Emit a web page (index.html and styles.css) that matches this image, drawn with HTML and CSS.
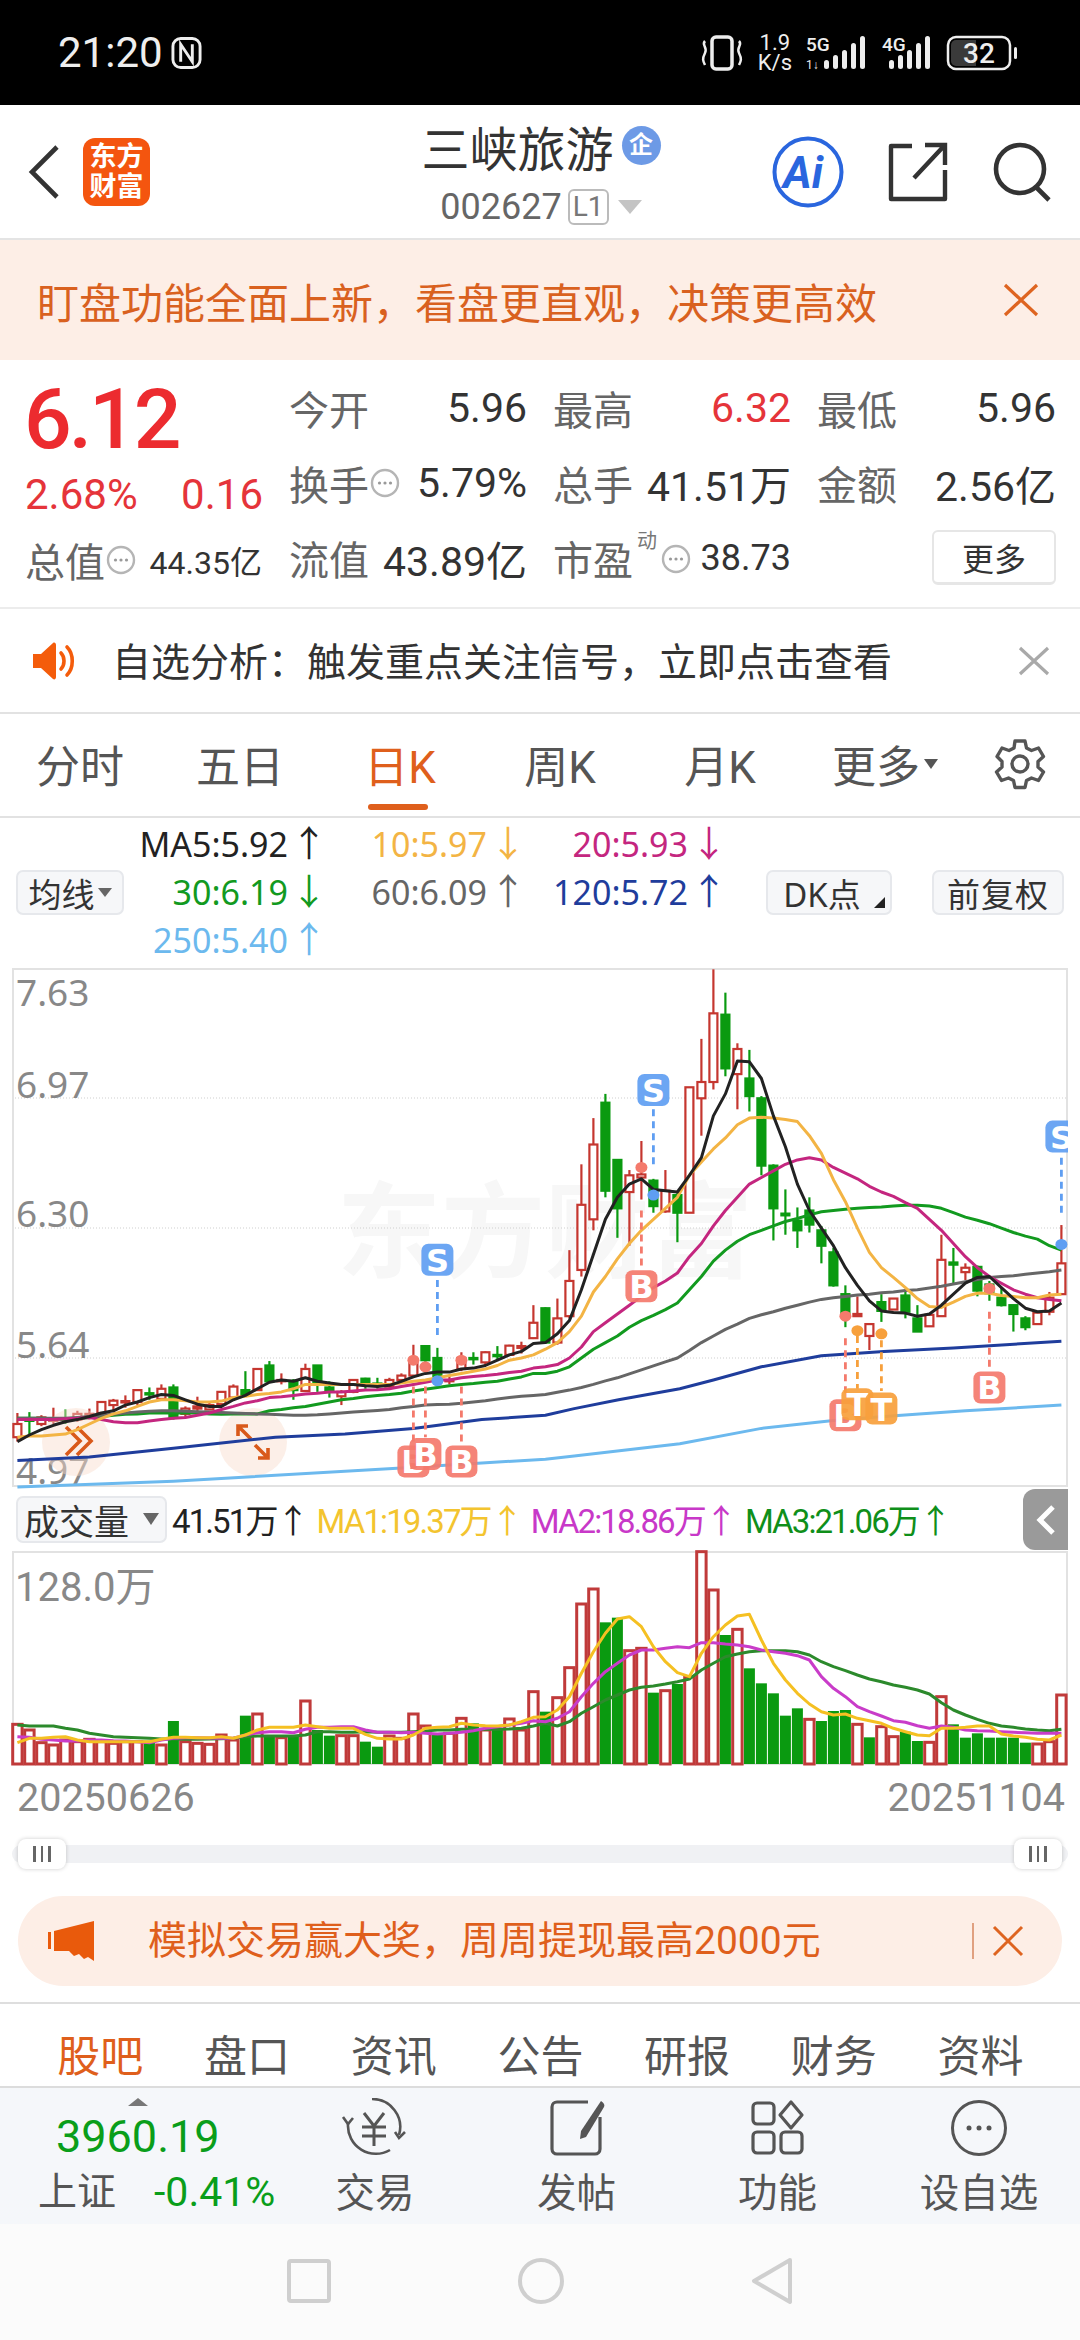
FILE: index.html
```html
<!DOCTYPE html>
<html lang="zh">
<head>
<meta charset="utf-8">
<title>三峡旅游 002627</title>
<link rel="stylesheet" href="styles.css">
</head>
<body>

<svg class="defs" width="0" height="0">
	<symbol id="ico-more" viewBox="0 0 30 30">
		<circle cx="15" cy="15" r="13" fill="none" stroke="#b5b5b5" stroke-width="2.4"/>
		<circle cx="9.5" cy="15" r="1.6" fill="#999"/><circle cx="15" cy="15" r="1.6" fill="#999"/><circle cx="20.5" cy="15" r="1.6" fill="#999"/>
	</symbol>
</svg>

<div class="statusbar">
	<div class="status-time">21:20
		<svg class="nfc" width="31" height="34" viewBox="0 0 32 34"><rect x="2" y="2" width="28" height="30" rx="8" fill="none" stroke="#eee" stroke-width="3"/><path d="M10 26V8l12 18V8" fill="none" stroke="#eee" stroke-width="3"/></svg>
	</div>
	<div class="status-icons">
		<svg width="44" height="36" viewBox="0 0 44 36"><rect x="12" y="2" width="20" height="32" rx="4" fill="none" stroke="#eee" stroke-width="3.5"/><path d="M5 6c-4 4 3 6 0 12s-2 8 0 12M39 6c4 4-3 6 0 12s2 8 0 12" fill="none" stroke="#eee" stroke-width="2.5"/></svg>
		<div class="speed"><span>1.9</span><span>K/s</span></div>
		<svg class="net" width="62" height="36" viewBox="0 0 62 36">
			<text x="0" y="16" class="net-label">5G</text>
			<text x="0" y="34" class="net-small">1↓</text>
			<rect x="18" y="25" width="5" height="9" rx="2.5" fill="#eee"/><rect x="27" y="20" width="5" height="14" rx="2.5" fill="#eee"/><rect x="36" y="15" width="5" height="19" rx="2.5" fill="#eee"/><rect x="45" y="8" width="5" height="26" rx="2.5" fill="#eee"/><rect x="54" y="1" width="5" height="33" rx="2.5" fill="#eee"/>
		</svg>
		<svg class="net" width="50" height="36" viewBox="0 0 50 36">
			<text x="0" y="16" class="net-label">4G</text>
			<rect x="7" y="25" width="5" height="9" rx="2.5" fill="#eee"/><rect x="16" y="20" width="5" height="14" rx="2.5" fill="#eee"/><rect x="25" y="15" width="5" height="19" rx="2.5" fill="#eee"/><rect x="34" y="8" width="5" height="26" rx="2.5" fill="#eee"/><rect x="43" y="1" width="5" height="33" rx="2.5" fill="#eee"/>
		</svg>
		<svg width="72" height="36" viewBox="0 0 72 36">
			<rect x="2" y="2" width="62" height="32" rx="8" fill="none" stroke="#eee" stroke-width="2.5"/>
			<path d="M10 5h20v26H10a5 5 0 0 1-5-5V10a5 5 0 0 1 5-5z" fill="#3a3a3a"/>
			<text x="33" y="28" class="batt-num">32</text>
			<rect x="68" y="12" width="3" height="12" rx="1.5" fill="#eee"/>
		</svg>
	</div>
</div>

<header class="header">
	<div class="header-left">
		<svg width="32" height="54" viewBox="0 0 32 54"><path d="M29 2L4 27l25 25" fill="none" stroke="#333" stroke-width="4.6"/></svg>
		<div class="logo"><span>东方</span><span>财富</span></div>
	</div>
	<div class="header-mid">
		<div class="stock-name">三峡旅游<span class="ent-badge">企</span></div>
		<div class="stock-code">002627<span class="level">L1</span><i class="code-arrow"></i></div>
	</div>
	<div class="header-right">
		<svg width="72" height="72" viewBox="0 0 72 72"><circle cx="36" cy="36" r="33.5" fill="#fff" stroke="#2a66de" stroke-width="4"/><text x="11" y="52" class="ai-text">Ai</text></svg>
		<svg width="60" height="60" viewBox="0 0 60 60"><path d="M24 4H3v53h54V28" fill="none" stroke="#333" stroke-width="4.4" stroke-linejoin="round"/><path d="M26 36L55 5M37 3h20v20" fill="none" stroke="#333" stroke-width="4.4"/></svg>
		<svg width="60" height="60" viewBox="0 0 60 60"><circle cx="28" cy="27" r="24" fill="none" stroke="#333" stroke-width="4.6"/><path d="M44 45l13 13" fill="none" stroke="#333" stroke-width="4.6"/></svg>
	</div>
</header>

<div class="banner">
	<span>盯盘功能全面上新，看盘更直观，决策更高效</span>
	<svg class="banner-x" width="36" height="34" viewBox="0 0 36 34"><path d="M2 2l32 30M34 2L2 32" fill="none" stroke="#de6420" stroke-width="3.2"/></svg>
</div>

<section class="quote">
	<div class="quote-main">
		<div class="price">6.12</div>
		<div class="change"><span>2.68%</span><span>0.16</span></div>
		<div class="cap">
			<span class="lbl">总值</span><svg class="more-dot" width="30" height="30"><use href="#ico-more"/></svg><span class="cap-val">44.35亿</span>
		</div>
	</div>
	<div class="stats">
		<div class="stat"><span class="lbl">今开</span><span class="val">5.96</span></div>
		<div class="stat"><span class="lbl">最高</span><span class="val up">6.32</span></div>
		<div class="stat"><span class="lbl">最低</span><span class="val">5.96</span></div>
		<div class="stat"><span class="lbl">换手<svg class="more-dot" width="30" height="30"><use href="#ico-more"/></svg></span><span class="val">5.79%</span></div>
		<div class="stat"><span class="lbl">总手</span><span class="val">41.51万</span></div>
		<div class="stat"><span class="lbl">金额</span><span class="val">2.56亿</span></div>
		<div class="stat"><span class="lbl">流值</span><span class="val">43.89亿</span></div>
		<div class="stat"><span class="lbl">市盈<sup class="dyn">动</sup><svg class="more-dot" width="30" height="30"><use href="#ico-more"/></svg></span><span class="val small">38.73</span></div>
		<div class="stat stat-btn"><button class="more-btn">更多</button></div>
	</div>
</section>

<div class="notice">
	<svg width="46" height="38" viewBox="0 0 46 38"><path d="M0 12h8L20 1c1.500-1 3 0 3 2v32c0 2-1.500 3-3 2L8 26H0z" fill="#f45c0b"/><path d="M28 11c4 4 4 12 0 16M34 5c7 7 7 21 0 28" fill="none" stroke="#f45c0b" stroke-width="3.6" stroke-linecap="round"/></svg>
	<span class="notice-text">自选分析：触发重点关注信号，立即点击查看</span>
	<svg class="notice-x" width="32" height="30" viewBox="0 0 32 30"><path d="M2 2l28 26M30 2L2 28" fill="none" stroke="#a9a9a9" stroke-width="3.2"/></svg>
</div>

<nav class="period-tabs">
	<span class="ptab">分时</span>
	<span class="ptab">五日</span>
	<span class="ptab active">日K</span>
	<span class="ptab">周K</span>
	<span class="ptab">月K</span>
	<span class="ptab ptab-more">更多<i class="tab-arrow"></i></span>
	<span class="ptab">
		<svg width="52" height="52" viewBox="0 0 52 52"><path d="M21 3h10l1.500 7 5 2.500 7-2.500 5 8.500-5.500 5v5.500l5.500 5-5 8.500-7-2.500-5 2.500-1.500 7H21l-1.500-7-5-2.500-7 2.500-5-8.500 5.500-5V23.500L3 18.500 8 10l7 2.500 5-2.500z" fill="none" stroke="#555" stroke-width="3.4" stroke-linejoin="round"/><circle cx="26" cy="26" r="8" fill="none" stroke="#555" stroke-width="3.4"/></svg>
	</span>
</nav>

<div class="ma-bar">
	<button class="chip chip-ma">均线<i class="chip-arrow"></i></button>
	<div class="ma-grid">
		<span class="c-ma5">MA5:5.92<b class="ar">↑</b></span>
		<span class="c-ma10">10:5.97<b class="ar">↓</b></span>
		<span class="c-ma20">20:5.93<b class="ar">↓</b></span>
		<span class="c-ma30">30:6.19<b class="ar">↓</b></span>
		<span class="c-ma60">60:6.09<b class="ar">↑</b></span>
		<span class="c-ma120">120:5.72<b class="ar">↑</b></span>
		<span class="c-ma250">250:5.40<b class="ar">↑</b></span>
	</div>
	<button class="chip chip-dk">DK点<i class="chip-corner"></i></button>
	<button class="chip chip-fq">前复权</button>
</div>

<svg id="kline" class="chart" width="1080" height="519" viewBox="0 968 1080 519">
	<text x="337" y="1270" class="watermark">东方财富</text>
	<line x1="12" x2="1068" y1="1098" y2="1098" class="gridline"/>
	<line x1="12" x2="1068" y1="1228" y2="1228" class="gridline"/>
	<line x1="12" x2="1068" y1="1358" y2="1358" class="gridline"/>
	<text x="16" y="1006" class="axis">7.63</text>
	<text x="16" y="1098" class="axis">6.97</text>
	<text x="16" y="1227" class="axis">6.30</text>
	<text x="16" y="1358" class="axis">5.64</text>
	<text x="16" y="1484" class="axis">4.97</text>
	<rect x="13" y="969" width="1054" height="517" class="frame"/>
</svg>

<div class="vol-bar">
	<button class="chip chip-vol">成交量<i class="chip-arrow big"></i></button>
	<span class="vol-item c-dark">41.51万↑</span>
	<span class="vol-item c-m1">MA1:19.37万↑</span>
	<span class="vol-item c-m2">MA2:18.86万↑</span>
	<span class="vol-item c-m3">MA3:21.06万↑</span>
	<div class="collapse"><svg width="20" height="32" viewBox="0 0 20 32"><path d="M17 3L4 16l13 13" fill="none" stroke="#fff" stroke-width="5"/></svg></div>
</div>

<svg id="volume" class="chart" width="1080" height="214" viewBox="0 1551 1080 214">
	<text x="15" y="1601" class="axis axis-vol">128.0万</text>
	<rect x="13" y="1552" width="1054" height="212" class="frame"/>
</svg>

<div class="dates"><span>20250626</span><span>20251104</span></div>

<div class="slider">
	<div class="slider-track"></div>
	<div class="slider-handle"><i></i><i></i><i></i></div>
	<div class="slider-handle"><i></i><i></i><i></i></div>
</div>

<div class="promo">
	<svg width="46" height="40" viewBox="0 0 46 40"><path d="M0 11h3v17H0zM6 10L46 0v40l-6-4-4 2-5-5-5 2-5-5-15 0z" fill="#e95a0c"/></svg>
	<span class="promo-text">模拟交易赢大奖，周周提现最高2000元</span>
	<i class="promo-sep"></i>
	<svg width="32" height="32" viewBox="0 0 32 32"><path d="M2 2l28 28M30 2L2 30" fill="none" stroke="#de6420" stroke-width="3"/></svg>
</div>

<nav class="news-tabs">
	<span class="ntab active">股吧</span>
	<span class="ntab">盘口</span>
	<span class="ntab">资讯</span>
	<span class="ntab">公告</span>
	<span class="ntab">研报</span>
	<span class="ntab">财务</span>
	<span class="ntab">资料</span>
</nav>

<div class="actionbar">
	<div class="index-box">
		<i class="index-tri"></i>
		<div class="index-num">3960.19</div>
		<div class="index-row"><span>上证</span><span class="index-pct">-0.41%</span></div>
	</div>
	<div class="action">
		<svg width="70" height="60" viewBox="0 0 70 60"><path d="M32 1a28 28 0 0 1 27 36M50 52A28 28 0 0 1 8 26" fill="none" stroke="#555" stroke-width="2.6"/><path d="M3 19l5 7 5-6M55 34l4 6 6-6" fill="none" stroke="#555" stroke-width="2.6"/><path d="M24 15l10 13 10-13M22 29h24M22 38h24M34 28v20" fill="none" stroke="#555" stroke-width="3"/></svg>
		<span>交易</span>
	</div>
	<div class="action">
		<svg width="58" height="58" viewBox="0 0 58 58"><path d="M40 3H9a5 5 0 0 0-5 5v42a5 5 0 0 0 5 5h38a5 5 0 0 0 5-5V18" fill="none" stroke="#555" stroke-width="3.2"/><path d="M53 2c3 2 4 4 3 6L38 38l-6 2 1-8z" fill="#555"/></svg>
		<span>发帖</span>
	</div>
	<div class="action">
		<svg width="56" height="56" viewBox="0 0 56 56"><rect x="3" y="3" width="21" height="21" rx="4" fill="none" stroke="#555" stroke-width="3.2"/><path d="M41 2l11 13-11 13-11-13z" fill="none" stroke="#555" stroke-width="3.2" stroke-linejoin="round"/><rect x="3" y="32" width="21" height="21" rx="4" fill="none" stroke="#555" stroke-width="3.2"/><rect x="31" y="32" width="21" height="21" rx="4" fill="none" stroke="#555" stroke-width="3.2"/></svg>
		<span>功能</span>
	</div>
	<div class="action">
		<svg width="58" height="58" viewBox="0 0 58 58"><circle cx="29" cy="29" r="26.5" fill="none" stroke="#555" stroke-width="3"/><circle cx="19" cy="29" r="2.5" fill="#555"/><circle cx="29" cy="29" r="2.5" fill="#555"/><circle cx="39" cy="29" r="2.5" fill="#555"/></svg>
		<span>设自选</span>
	</div>
</div>

<div class="navbar">
	<svg width="44" height="44" viewBox="0 0 44 44"><rect x="2" y="2" width="40" height="40" rx="2" fill="none" stroke="#cfcfcf" stroke-width="4"/></svg>
	<svg width="46" height="46" viewBox="0 0 46 46"><circle cx="23" cy="23" r="21" fill="none" stroke="#cfcfcf" stroke-width="4"/></svg>
	<svg width="42" height="48" viewBox="0 0 42 48"><path d="M39 3L3 24l36 21z" fill="none" stroke="#cfcfcf" stroke-width="4" stroke-linejoin="round"/></svg>
</div>

<script src="chart.js"></script>
</body>
</html>
```

FILE: styles.css
```css
* {
	box-sizing: border-box;
}
body {
	background-color: #fff;
	color: #333;
	font-family: Roboto, "Noto Sans CJK SC", sans-serif;
	margin: 0;
	width: 1080px;
}
button {
	font-family: inherit;
}
.defs {
	display: block;
	height: 0;
}

/* status bar */
.statusbar {
	align-items: center;
	background-color: #000;
	color: #eee;
	display: flex;
	height: 105px;
	justify-content: space-between;
	padding: 0 62px 0 58px;
}
.status-time {
	align-items: center;
	display: flex;
	font-size: 42px;
	gap: 8px;
}
.status-icons {
	align-items: center;
	display: flex;
	gap: 14px;
}
.speed {
	display: flex;
	flex-direction: column;
	font-size: 22px;
	line-height: 20px;
	text-align: center;
}
.net {
	overflow: visible;
}
.net-label {
	fill: #eee;
	font: 500 19px Roboto, sans-serif;
}
.net-small {
	fill: #eee;
	font: 12px Roboto, sans-serif;
}
.batt-num {
	fill: #eee;
	font: 500 28px Roboto, sans-serif;
	text-anchor: middle;
}

/* header */
.header {
	align-items: center;
	border-bottom: 2px solid #e4e4e4;
	display: grid;
	grid-template-columns: 1fr auto 1fr;
	height: 135px;
	padding: 0 28px;
}
.header-left {
	align-items: center;
	display: flex;
	gap: 23px;
}
.logo {
	background-color: #f4550f;
	border-radius: 12px;
	color: #fff;
	display: flex;
	flex-direction: column;
	font-size: 27px;
	font-weight: 700;
	height: 68px;
	justify-content: center;
	line-height: 30px;
	text-align: center;
	width: 67px;
}
.header-mid {
	align-items: center;
	display: flex;
	flex-direction: column;
	margin: -4px 0 0 2px;
}
.stock-name {
	align-items: center;
	color: #333;
	display: flex;
	font-size: 48px;
	gap: 8px;
	height: 70px;
}
.ent-badge {
	background-color: #6d9ae6;
	border-radius: 50%;
	color: #fff;
	font-size: 24px;
	font-weight: 700;
	height: 39px;
	line-height: 39px;
	text-align: center;
	width: 39px;
}
.stock-code {
	align-items: center;
	color: #666;
	display: flex;
	font-size: 36px;
	height: 44px;
	margin-top: 4px;
}
.level {
	border: 2px solid #bbb;
	border-radius: 6px;
	color: #777;
	font-size: 28px;
	height: 36px;
	line-height: 32px;
	margin-left: 6px;
	text-align: center;
	width: 41px;
}
.code-arrow {
	border-left: 12px solid transparent;
	border-right: 12px solid transparent;
	border-top: 14px solid #c4c4c4;
	margin-left: 9px;
}
.header-right {
	align-items: center;
	display: flex;
	gap: 44px;
	justify-content: flex-end;
}
.ai-text {
	fill: #2a66de;
	font: italic 700 44px Roboto, sans-serif;
}

/* orange banner */
.banner {
	align-items: center;
	background-color: #fdeee6;
	color: #d9611f;
	display: flex;
	font-size: 42px;
	height: 120px;
	justify-content: space-between;
	padding: 0 41px 0 37px;
}

/* quote */
.quote {
	border-bottom: 2px solid #ececec;
	display: flex;
	height: 249px;
	padding-top: 10px;
}
.quote-main {
	padding: 1px 0 0 25px;
	width: 289px;
}
.price {
	color: #ec2b2f;
	font-size: 84px;
	font-weight: 500;
	height: 84px;
	letter-spacing: -3px;
	line-height: 98px;
	margin-left: -1px;
}
.change {
	color: #e5343a;
	display: flex;
	font-size: 42px;
	height: 67px;
	justify-content: space-between;
	line-height: 66px;
	padding-top: 7px;
	width: 238px;
}
.cap {
	align-items: center;
	display: flex;
	height: 75px;
	width: 237px;
}
.cap-val {
	color: #333;
	font-size: 32px;
	margin-left: auto;
}
.lbl {
	align-items: center;
	color: #666;
	display: inline-flex;
	font-size: 40px;
	white-space: nowrap;
}
.more-dot {
	margin-left: 1px;
}
.stats {
	column-gap: 26px;
	display: grid;
	grid-auto-rows: 75px;
	grid-template-columns: 238px 238px 239px;
}
.stat {
	align-items: center;
	display: flex;
	justify-content: space-between;
}
.val {
	color: #333;
	font-size: 41px;
	white-space: nowrap;
}
.val.up {
	color: #e5343a;
}
.val.small {
	font-size: 36px;
}
.dyn {
	color: #777;
	font-size: 20px;
	line-height: 1;
	margin: 0 0 34px 4px;
	width: 24px;
}
.dyn + .more-dot {
	margin-left: 0;
	margin-top: 2px;
}
.stat-btn {
	justify-content: flex-end;
}
.more-btn {
	background-color: #fff;
	border: 2px solid #e6e6e6;
	border-bottom-width: 3px;
	border-radius: 6px;
	color: #333;
	font-size: 32px;
	height: 55px;
	padding: 0;
	width: 124px;
}

/* notice */
.notice {
	align-items: center;
	border-bottom: 2px solid #e2e2e2;
	display: flex;
	height: 105px;
	padding: 0 30px 0 33px;
}
.notice-text {
	color: #333;
	flex: 1;
	font-size: 39px;
	margin: 0 0 4px 33px;
}

/* period tabs */
.period-tabs {
	align-items: center;
	border-bottom: 2px solid #e2e2e2;
	display: grid;
	grid-template-columns: repeat(6, 160px) 120px;
	height: 104px;
	padding-bottom: 2px;
}
.ptab {
	align-items: center;
	color: #555;
	display: flex;
	font-size: 44px;
	height: 100%;
	justify-content: center;
	position: relative;
}
.ptab.active {
	color: #df5f1c;
}
.ptab.active::after {
	background-color: #df5f1c;
	border-radius: 3px;
	bottom: 4px;
	content: "";
	height: 6px;
	left: 48px;
	position: absolute;
	width: 60px;
}
.ptab-more {
	padding-left: 10px;
}
.tab-arrow {
	border-left: 7px solid transparent;
	border-right: 7px solid transparent;
	border-top: 10px solid #555;
	margin-left: 4px;
}

/* MA legend */
.ma-bar {
	align-items: center;
	display: flex;
	height: 150px;
	padding: 3px 16px 0;
}
.chip {
	align-items: center;
	background-color: #f6f7f9;
	border: 2px solid #e6e8ec;
	border-radius: 7px;
	color: #333;
	display: flex;
	flex: none;
	font-size: 33px;
	height: 45px;
	justify-content: center;
	margin-top: -4px;
	padding: 0;
	position: relative;
}
.chip-ma {
	width: 108px;
}
.chip-dk {
	font-family: "Noto Sans", "Noto Sans CJK SC", sans-serif;
	margin-left: 50px;
	padding-right: 14px;
	width: 126px;
}
.chip-fq {
	letter-spacing: 1px;
	margin-left: 40px;
	width: 132px;
}
.chip-arrow {
	border-left: 7px solid transparent;
	border-right: 7px solid transparent;
	border-top: 9px solid #666;
	margin-left: 3px;
}
.chip-arrow.big {
	border-left-width: 8px;
	border-right-width: 8px;
	border-top-width: 12px;
	margin-left: 14px;
}
.chip-corner {
	border-bottom: 11px solid #222;
	border-left: 11px solid transparent;
	bottom: 5px;
	position: absolute;
	right: 5px;
}
.ma-grid {
	display: grid;
	font-family: "Noto Sans", sans-serif;
	font-size: 34px;
	grid-auto-rows: 48px;
	grid-template-columns: 192px 199px 201px;
	line-height: 48px;
	margin-top: -6px;
	text-align: right;
	white-space: nowrap;
}
.ar {
	display: inline-block;
	font-family: "Noto Sans CJK SC", sans-serif;
	font-size: 36px;
	font-weight: 400;
	line-height: 1;
	margin: 0 -11px 0 3px;
}
.c-ma5 { color: #222; }
.c-ma10 { color: #f3b444; }
.c-ma20 { color: #c4267f; }
.c-ma30 { color: #129a1f; }
.c-ma60 { color: #666; }
.c-ma120 { color: #1f3d9c; }
.c-ma250 { color: #6cb9ee; }

/* charts */
.chart {
	display: block;
	overflow: visible;
}
.frame {
	fill: none;
	stroke: #e2e2e2;
	stroke-width: 2;
}
.gridline {
	stroke: #cfcfcf;
	stroke-dasharray: 1 2;
	stroke-width: 1;
}
.axis {
	fill: #888;
	font: 37px "Noto Sans", "Noto Sans CJK SC", sans-serif;
}
.axis-vol {
	font-family: Roboto, "Noto Sans CJK SC", sans-serif;
	font-size: 40px;
}
.watermark {
	fill: #f7f7f7;
	font: 700 104px "Noto Sans CJK SC", sans-serif;
}
.wick {
	stroke-width: 2.2;
}
.up-c {
	fill: #fff;
	stroke: #c5362f;
}
.down-c {
	fill: #0a9a10;
	stroke: #0a9a10;
}
.ma-line {
	fill: none;
	stroke-linejoin: round;
	stroke-width: 3;
}
.bar-up {
	fill: #fff;
	stroke: #c03a3a;
	stroke-width: 3;
}
.bar-down {
	fill: #0a9a10;
}
.hint-circle {
	fill: #f9dccb;
	opacity: .45;
}
.hint-arrow {
	fill: none;
	stroke: #d9591a;
	stroke-width: 3.6;
}
.mark-dash {
	stroke-dasharray: 7 5;
	stroke-width: 2.8;
}
.mark-box {
	opacity: .92;
}
.mark-letter {
	fill: #fff;
	font: 700 32px "DejaVu Sans", sans-serif;
	text-anchor: middle;
}

/* volume legend */
.vol-bar {
	align-items: center;
	display: flex;
	height: 64px;
	padding-left: 16px;
	position: relative;
}
.chip-vol {
	font-size: 35px;
	height: 47px;
	margin-right: 5px;
	margin-top: 0;
	width: 151px;
}
.vol-item {
	font-size: 33px;
	letter-spacing: -1.9px;
	margin-right: 9px;
	white-space: nowrap;
}
.c-dark { color: #222; }
.c-m1 { color: #f3c42f; }
.c-m2 { color: #c838c8; }
.c-m3 { color: #0f8f1a; }
.collapse {
	align-items: center;
	background-color: #9a9a9a;
	border-radius: 12px 0 0 12px;
	display: flex;
	height: 61px;
	justify-content: center;
	position: absolute;
	right: 12px;
	top: 2px;
	width: 45px;
}

/* dates + slider */
.dates {
	color: #888;
	display: flex;
	font-size: 39.5px;
	height: 74px;
	justify-content: space-between;
	line-height: 66px;
	padding: 0 15px 0 17px;
}
.slider {
	align-items: center;
	display: flex;
	height: 30px;
	justify-content: space-between;
	padding: 0 18px;
	position: relative;
}
.slider-track {
	background-color: #f0f1f4;
	border-radius: 10px;
	height: 18px;
	left: 12px;
	position: absolute;
	right: 12px;
}
.slider-handle {
	align-items: center;
	background-color: #fff;
	border-radius: 8px;
	box-shadow: 0 0 4px rgba(0, 0, 0, .2);
	display: flex;
	gap: 5px;
	height: 30px;
	justify-content: center;
	position: relative;
	width: 48px;
}
.slider-handle i {
	background-color: #666;
	height: 16px;
	width: 2.5px;
}

/* promo */
.promo {
	align-items: center;
	background-color: #fdeee6;
	border-radius: 45px;
	color: #df5f1c;
	display: flex;
	font-size: 39px;
	height: 90px;
	margin: 27px 18px 0;
	padding: 0 38px 0 30px;
}
.promo-text {
	flex: 1;
	margin: 0 0 9px 54px;
}
.promo-sep {
	background-color: #e0a080;
	height: 36px;
	margin-right: 18px;
	width: 2px;
}

/* news tabs */
.news-tabs {
	align-items: center;
	border-bottom: 2px solid #dcdcdc;
	border-top: 2px solid #dedede;
	display: grid;
	grid-template-columns: repeat(7, 146.7px);
	height: 86px;
	margin-top: 16px;
	padding: 16px 0 0 27px;
}
.ntab {
	color: #555;
	font-size: 43px;
	text-align: center;
}
.ntab.active {
	color: #df5f1c;
}

/* bottom action bar */
.actionbar {
	background-color: #f5f7fa;
	display: grid;
	grid-template-columns: 274px 202px 201px 201px 202px;
	height: 136px;
}
.index-box {
	padding: 10px 0 0 38px;
}
.index-tri {
	border-bottom: 8px solid #777;
	border-left: 10px solid transparent;
	border-right: 10px solid transparent;
	display: block;
	height: 0;
	margin-left: 90px;
	width: 0;
}
.index-num {
	color: #0a9e1a;
	font-size: 45px;
	line-height: 46px;
	margin: 8px 0 0 18px;
}
.index-row {
	align-items: center;
	color: #555;
	display: flex;
	font-size: 39px;
	line-height: 50px;
	margin-top: 7px;
	white-space: nowrap;
}
.index-pct {
	color: #0a9e1a;
	font-size: 41px;
	margin-left: 38px;
}
.action {
	align-items: center;
	color: #555;
	display: flex;
	flex-direction: column;
	font-size: 39.5px;
	padding-top: 10px;
}
.action svg {
	height: 60px;
}
.action span {
	line-height: 50px;
	margin-top: 11px;
	white-space: nowrap;
}

/* system nav */
.navbar {
	align-items: center;
	background-color: #fbfbfb;
	display: flex;
	gap: 187px;
	height: 116px;
	justify-content: center;
	padding-bottom: 2px;
}
```

FILE: chart.js
```js
// values are in "raster rows" read off the chart, mapped to page y below
var NS = "http://www.w3.org/2000/svg";

function xAt(i) { return 17.4 + 12 * i; }
function kY(v) { return 810 + v / 2.272; }
function vY(v) { return 1480 + v / 3; }

function el(parent, name, attrs, text)
{
	var node = document.createElementNS(NS, name);
	for (var k in attrs) node.setAttribute(k, attrs[k]);
	if (text) node.textContent = text;
	parent.appendChild(node);
	return node;
}

// [up?, high, bodyTop, bodyBottom, low]
var candles = [
	[1,1370,1395,1425,1435],[0,1368,1385,1388,1418],[1,1375,1380,1395,1400],[1,1358,1385,1388,1395],
	[0,1362,1383,1386,1395],[1,1365,1372,1385,1390],[1,1360,1372,1375,1385],[1,1345,1345,1370,1370],
	[1,1338,1342,1352,1365],[1,1330,1343,1346,1358],[1,1318,1318,1345,1352],[0,1312,1325,1328,1340],
	[1,1305,1315,1338,1340],[0,1305,1312,1380,1385],[1,1355,1360,1372,1380],[1,1333,1355,1360,1375],
	[1,1345,1352,1362,1362],[1,1322,1322,1350,1355],[1,1305,1310,1335,1340],[0,1275,1318,1330,1332],
	[1,1268,1270,1318,1320],[0,1252,1262,1298,1302],[1,1280,1295,1298,1305],[0,1293,1297,1318,1340],
	[1,1258,1270,1320,1322],[0,1262,1262,1300,1322],[0,1298,1312,1322,1335],[1,1318,1322,1332,1352],
	[1,1293,1295,1322,1325],[0,1290,1292,1305,1315],[0,1290,1303,1305,1315],[1,1290,1295,1310,1312],
	[1,1280,1285,1295,1300],[1,1215,1255,1285,1290],[0,1218,1218,1250,1275],[0,1222,1245,1295,1305],
	[1,1285,1295,1298,1305],[1,1232,1245,1270,1275],[0,1232,1245,1248,1260],[1,1230,1232,1255,1262],
	[0,1218,1238,1241,1250],[1,1215,1217,1238,1240],[1,1208,1218,1222,1235],[1,1125,1165,1200,1202],
	[0,1130,1132,1210,1212],[1,1110,1155,1210,1215],[1,1000,1070,1150,1155],[1,805,897,1045,1060],
	[1,700,760,930,955],[0,645,665,865,880],[0,793,795,905,972],[1,818,830,868,990],
	[1,752,828,835,885],[0,838,842,900,915],[1,818,865,912,915],[0,870,875,915,982],
	[1,630,630,915,915],[1,520,618,655,740],[1,362,462,618,635],[0,415,465,587,605],
	[1,530,543,600,680],[0,545,610,650,685],[0,650,655,808,830],[0,805,808,905,978],
	[0,862,917,921,965],[0,903,933,955,995],[0,880,910,942,960],[0,945,955,990,1030],
	[0,995,1005,1080,1083],[0,1080,1100,1145,1175],[1,1105,1145,1150,1150],[1,1168,1168,1195,1227],
	[0,1100,1118,1138,1163],[1,1110,1110,1135,1135],[0,1095,1103,1140,1155],[0,1125,1155,1185,1185],
	[1,1147,1147,1173,1173],[1,965,1022,1150,1150],[0,995,1028,1033,1078],[1,1030,1040,1050,1068],
	[0,1035,1038,1092,1105],[0,1070,1078,1098,1115],[0,1085,1108,1125,1128],[0,1125,1125,1145,1185],
	[0,1150,1155,1175,1182],[1,1142,1142,1168,1168],[1,1095,1108,1140,1148],[1,943,1030,1100,1100]
];

var kLines = {
	"#129a1f": [1382,1382,1382,1383,1385,1383,1380,1378,1375,1373,1372,1370,1370,1370,1370,1370,1372,1373,1372,1372,1372,1365,1362,1358,1355,1350,1345,1340,1337,1333,1330,1328,1325,1320,1316,1312,1308,1305,1303,1300,1298,1293,1288,1280,
		1280,1275,1265,1245,1225,1210,1195,1175,1160,1148,1135,1120,1090,1060,1025,1000,980,965,955,945,935,928,920,913,910,907,905,903,902,900,898,898,900,905,915,925,932,940,950,960,968,975,990,1000],
	"#666666": [1382,1382,1382,1382,1382,1380,1378,1375,1373,1370,1368,1366,1365,1365,1366,1367,1368,1369,1370,1371,1372,1373,1374,1375,1375,1374,1372,1370,1368,1366,1364,1362,1358,1355,1352,1351,1350,1348,1345,1342,1338,1335,1332,1330,
		1328,1323,1318,1312,1305,1297,1290,1281,1272,1263,1254,1245,1228,1210,1195,1180,1168,1155,1147,1140,1132,1125,1118,1112,1108,1105,1102,1100,1097,1095,1092,1090,1086,1082,1077,1072,1067,1062,1060,1058,1055,1052,1049,1045],
	"#c4267f": [1385,1385,1385,1385,1383,1382,1380,1385,1390,1392,1392,1388,1385,1382,1380,1375,1370,1362,1355,1347,1342,1335,1333,1330,1327,1325,1322,1322,1320,1318,1317,1315,1310,1305,1300,1295,1295,1290,1287,1285,1282,1278,1275,1268,
		1265,1260,1245,1220,1185,1165,1145,1125,1105,1085,1070,1052,1015,985,945,910,880,850,835,820,805,795,790,795,812,825,838,855,868,878,892,905,930,955,985,1015,1040,1060,1075,1090,1100,1108,1112,1115],
	"#f3b444": [1425,1422,1422,1420,1418,1408,1395,1382,1372,1365,1355,1345,1340,1340,1342,1345,1345,1343,1335,1332,1328,1326,1322,1315,1305,1305,1305,1305,1305,1305,1305,1305,1302,1298,1295,1290,1285,1280,1275,1270,1262,1250,1245,1238,
		1225,1210,1185,1150,1095,1060,1020,985,955,930,905,880,830,800,770,745,715,700,698,700,703,708,740,780,840,890,950,1005,1040,1062,1085,1110,1128,1130,1118,1105,1098,1098,1103,1105,1108,1108,1102,1100],
	"#222222": [1435,1420,1408,1398,1390,1385,1378,1370,1365,1352,1345,1335,1328,1330,1340,1350,1355,1355,1340,1330,1315,1300,1295,1298,1290,1298,1302,1305,1305,1308,1310,1307,1298,1288,1280,1277,1277,1270,1268,1262,1250,1238,1230,1212,
		1210,1190,1160,1090,1010,930,880,850,838,862,865,868,830,790,695,645,570,572,610,695,765,850,910,950,990,1040,1080,1115,1138,1142,1143,1150,1145,1125,1100,1075,1062,1060,1085,1110,1132,1140,1138,1120]
};

var longLines = {
	"#6cb9ee": [[0,1538],[13,1525],[32,1495],[44,1475],[46.4,1468],[55.2,1440],[62,1405],[68,1387],[72.2,1378],[79,1365],[87,1352]],
	"#1f3d9c": [[0,1478],[6,1470],[13,1450],[21.5,1425],[27.3,1418],[33,1405],[38.7,1385],[44,1375],[46.4,1360],[50.1,1340],[55.2,1315],[58,1295],[62,1265],[67,1240],[72.2,1230],[78,1222],[87,1207]]
};

// [letter, index, boxCenter, dot, dashFrom, dashTo]
var marks = [
	["B",33,1480,1250,1310,1440],["B",34,1463,1265,1310,1425],["B",37,1480,1250,1310,1440],["S",35,1022,1297,1068,1195],
	["B",52,1082,812,910,1040],["S",53,636,875,680,810],["B",69,1375,1150,1200,1335],["T",70,1350,1183,1195,1315],
	["T",72,1360,1190,1205,1320],["B",81,1312,1087,1140,1270],["S",87,742,987,790,915]
];
var markColor = { B: "#f47a6c", S: "#5f9ef2", T: "#f7a03c" };

var vols = [
	[1,733],[1,750],[1,788],[1,795],[1,780],[1,785],[1,778],[1,785],[1,790],[1,785],[1,785],[0,782],
	[1,795],[0,723],[1,785],[1,790],[1,793],[1,765],[1,780],[0,707],[1,702],[0,765],[1,773],[0,765],
	[1,663],[0,750],[0,767],[1,767],[1,767],[0,785],[0,800],[1,768],[1,775],[1,702],[1,738],[0,760],
	[1,760],[1,715],[0,730],[1,750],[0,745],[1,717],[1,750],[1,635],
	[0,695],[1,653],[1,563],[1,372],[1,327],[0,427],[0,413],[1,512],[1,505],[0,638],[1,632],[0,612],
	[1,590],[1,215],[1,330],[0,465],[1,448],[0,565],[0,610],[0,640],[0,707],[0,685],[1,718],[0,723],
	[0,693],[0,690],[1,733],[0,772],[1,740],[1,770],[0,755],[0,783],[1,787],[1,650],[0,733],[0,773],
	[0,760],[0,773],[0,773],[0,773],[0,788],[1,792],[1,785],[1,645]
];

var volLines = {
	"#2c8a2c": [735,738,738,738,745,750,760,765,770,772,773,775,777,777,778,778,777,776,775,770,768,768,768,768,765,755,755,757,757,755,757,757,757,755,753,750,750,748,748,748,748,747,745,738,
		730,738,725,700,680,660,645,630,622,618,612,605,597,570,550,530,522,515,512,512,512,515,525,545,560,572,585,597,605,615,622,630,642,668,690,705,718,730,738,742,747,750,752,748],
	"#c93cc9": [770,772,778,780,783,783,780,780,782,783,785,788,780,775,773,773,774,775,775,765,758,755,755,758,748,742,742,740,740,750,757,757,758,757,760,762,760,757,752,745,740,735,730,722,
		725,715,695,650,610,575,550,525,510,510,505,500,503,488,488,492,495,500,510,515,520,527,540,590,625,650,680,695,708,722,727,737,745,738,742,750,752,753,755,757,758,760,760,760],
	"#f5c022": [788,775,775,772,770,780,785,785,785,785,785,785,778,772,772,773,773,770,775,765,750,742,742,742,735,740,745,745,745,763,775,777,777,765,745,742,740,730,735,737,738,735,725,712,
		710,690,650,580,515,460,417,410,440,500,545,578,590,520,470,435,408,403,480,550,600,640,672,695,705,702,715,722,730,745,755,765,767,745,745,742,738,738,762,768,772,778,780,765]
};

function drawLine(svg, pts, color, yFn)
{
	var s = pts.map(function (p) { return xAt(p[0]).toFixed(1) + "," + yFn(p[1]).toFixed(1); }).join(" ");
	el(svg, "polyline", { points: s, stroke: color, "class": "ma-line" });
}
function indexed(vals)
{
	return vals.map(function (v, i) { return [i, v]; });
}

function drawKline()
{
	var svg = document.getElementById("kline");
	var name;

	candles.forEach(function (c, i)
	{
		var x = xAt(i), cls = c[0] ? "up-c" : "down-c";
		var top = kY(c[2]), bot = kY(c[3]);
		el(svg, "line", { x1: x, x2: x, y1: kY(c[1]), y2: top, "class": "wick " + cls });
		el(svg, "line", { x1: x, x2: x, y1: bot, y2: kY(c[4]), "class": "wick " + cls });
		el(svg, "rect", { x: x - 4, y: top, width: 8, height: Math.max(bot - top, 0.5), "stroke-width": 2.2, "class": cls });
	});

	// hint circles sit under the averages
	el(svg, "circle", { cx: 76, cy: 1442, r: 34, "class": "hint-circle" });
	el(svg, "circle", { cx: 253, cy: 1442, r: 34, "class": "hint-circle" });
	el(svg, "path", { d: "M66 1427l14 14-14 14M77 1427l14 14-14 14", "class": "hint-arrow" });
	el(svg, "path", { d: "M238 1426l13 13M238 1436v-10h10M268 1458l-13-13M268 1448v10h-10", "class": "hint-arrow" });

	for (name in longLines) drawLine(svg, longLines[name], name, kY);
	for (name in kLines) drawLine(svg, indexed(kLines[name]), name, kY);

	marks.forEach(function (m)
	{
		var x = xAt(m[1]), color = markColor[m[0]];
		el(svg, "ellipse", { cx: x, cy: kY(m[3]), rx: 6, ry: 5.5, fill: color });
		el(svg, "line", { x1: x, x2: x, y1: kY(m[4]), y2: kY(m[5]), stroke: color, "class": "mark-dash" });
		el(svg, "rect", { x: x - 16, y: kY(m[2]) - 16, width: 32, height: 32, rx: 7, fill: color, "class": "mark-box" });
		el(svg, "text", { x: x, y: kY(m[2]) + 12, "class": "mark-letter" }, m[0]);
	});

	// right edge clips the last S badge
	el(svg, "rect", { x: 1068, y: 968, width: 12, height: 519, fill: "#fff" });
}

function drawVolume()
{
	var svg = document.getElementById("volume");
	var base = 1764;

	vols.forEach(function (b, i)
	{
		var x = xAt(i), top = vY(b[1]);
		if (b[0]) el(svg, "rect", { x: x - 4.7, y: top, width: 9.4, height: base - top, "class": "bar-up" });
		else el(svg, "rect", { x: x - 5.5, y: top, width: 11, height: base - top, "class": "bar-down" });
	});

	for (var name in volLines) drawLine(svg, indexed(volLines[name]), name, vY);
}

drawKline();
drawVolume();
```
